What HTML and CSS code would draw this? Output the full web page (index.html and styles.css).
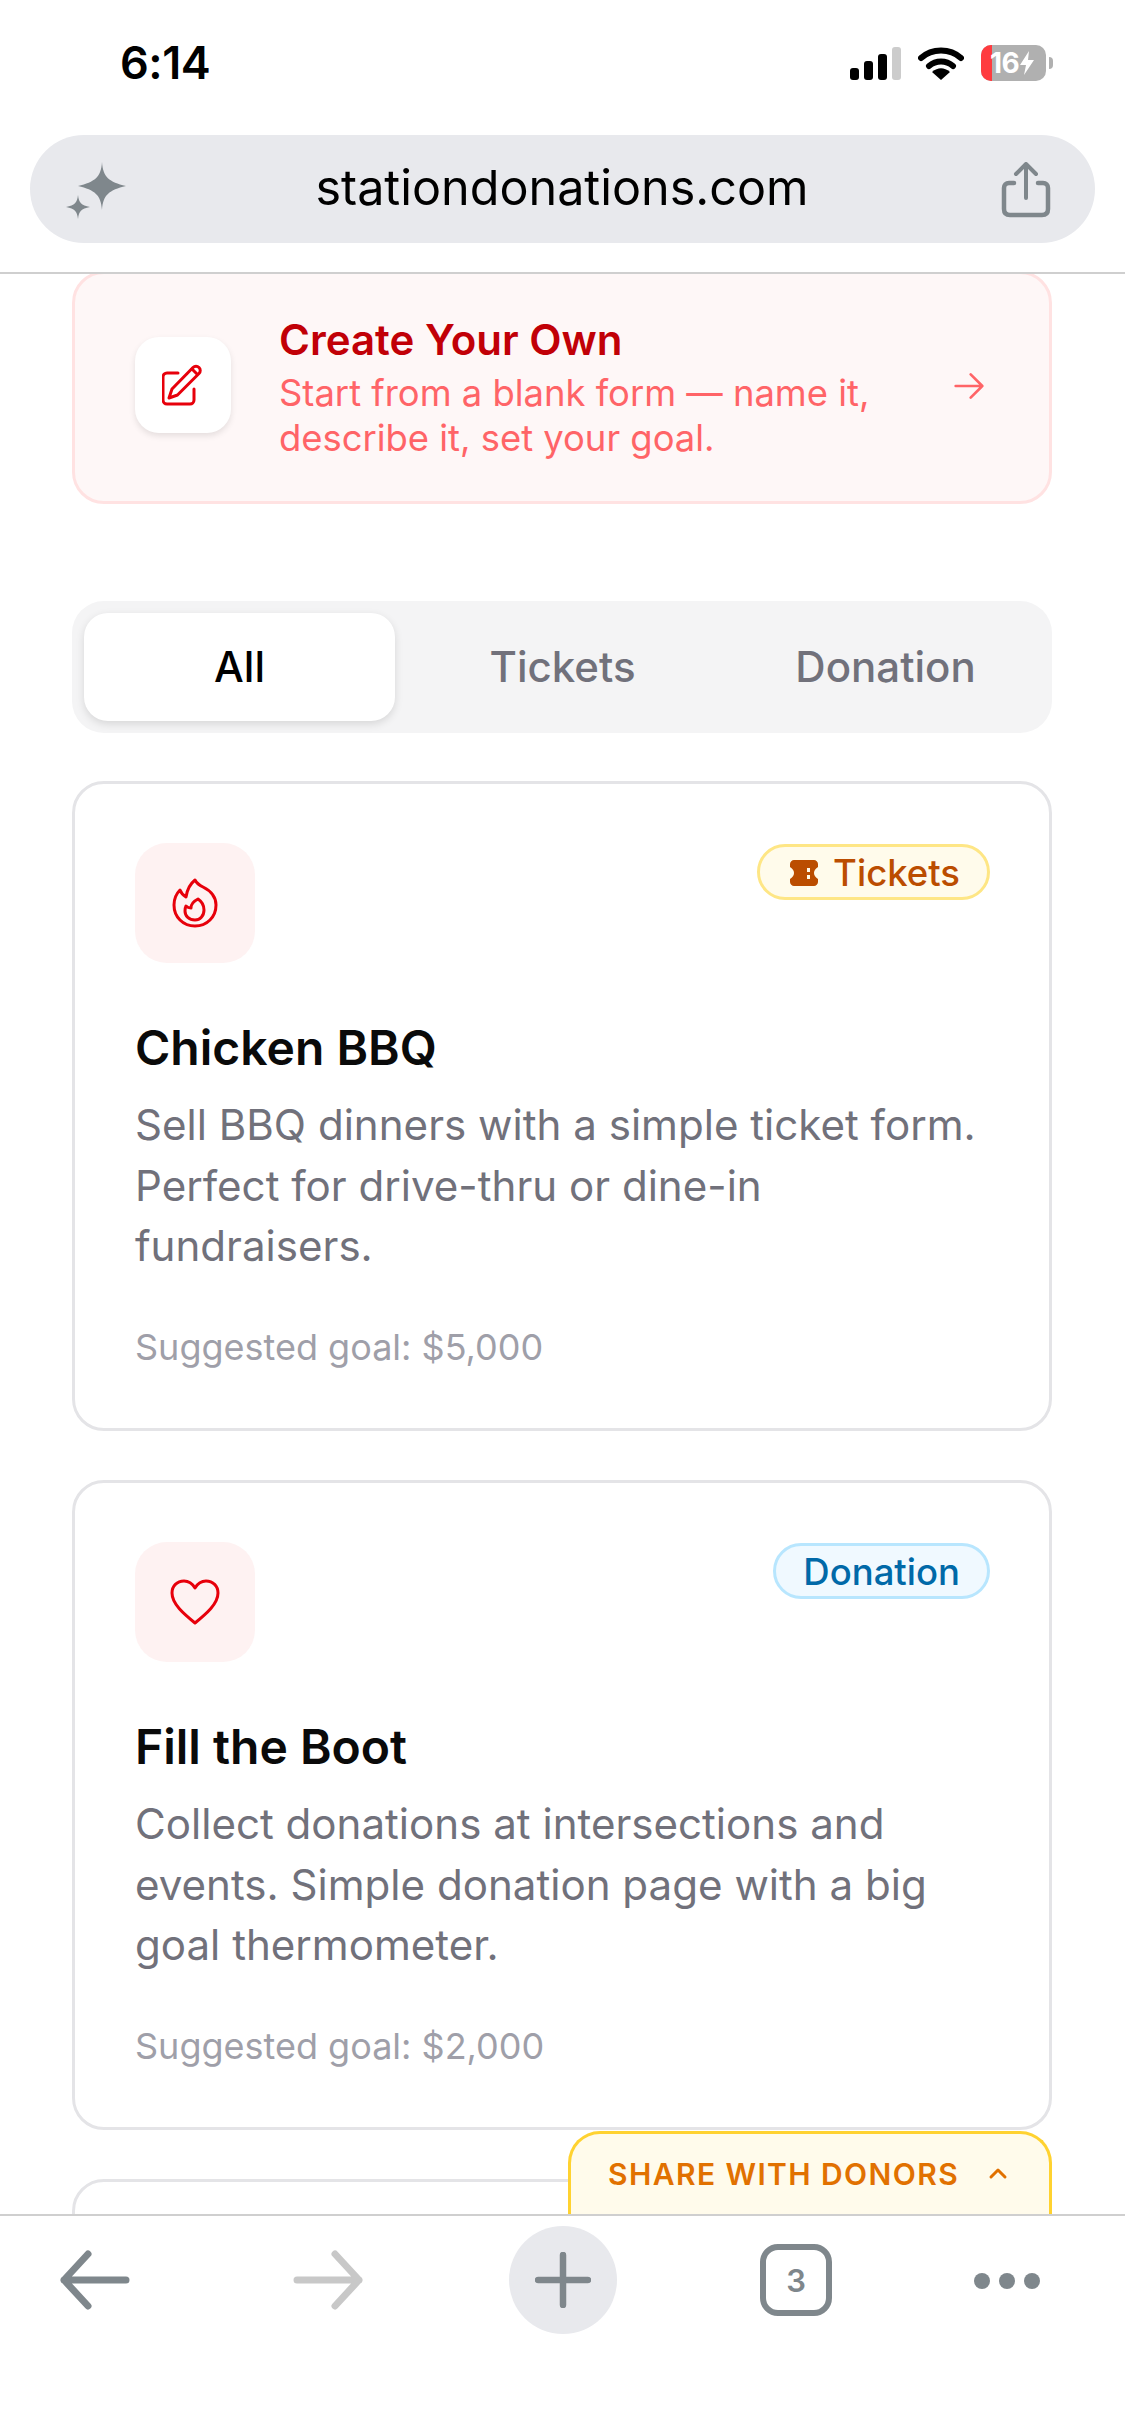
FILE: index.html
```html
<!DOCTYPE html>
<html lang="en">
<head>
<meta charset="utf-8">
<title>Station Donations</title>
<link rel="stylesheet" href="styles.css">
</head>
<body>
<div class="phone">
  <header class="chrome">
    <div class="status">
      <span class="time">6:14</span>
      <div class="status-icons">
        <svg class="signal" width="51" height="33" viewBox="0 0 51 33"><rect x="0" y="21" width="9" height="12" rx="3" fill="#000"/><rect x="14" y="14" width="9" height="19" rx="3" fill="#000"/><rect x="28" y="7" width="9" height="26" rx="3" fill="#000"/><rect x="42" y="0" width="9" height="33" rx="3" fill="#ccc"/></svg>
        <svg class="wifi" width="46" height="33" viewBox="0 0 46 33"><path d="M3 11C14 1 32 1 43 11" fill="none" stroke="#000" stroke-width="6" stroke-linecap="round"/><path d="M11 19C18 13 28 13 35 19" fill="none" stroke="#000" stroke-width="6" stroke-linecap="round"/><path d="M14 25C20 20 26 20 32 25L23 33Z" fill="#000"/></svg>
        <div class="battery"><div class="batt-body"><div class="batt-red"></div><span class="batt-num">16</span><svg class="batt-bolt" width="14" height="24" viewBox="0 0 14 24"><path d="M9 0L0 14H6L4 24L14 9H8Z" fill="#fff"/></svg></div><div class="batt-cap"></div></div>
      </div>
    </div>
    <div class="urlbar">
      <svg class="spark" width="64" height="60" viewBox="0 0 64 60"><path d="M37 1C38 16 44 21 61 25C44 29 38 34 37 49C36 34 30 29 13 25C30 21 36 16 37 1Z" fill="#7f878c"/><path d="M13 34C14 42 16 44 25 46C16 48 14 50 13 58C12 50 10 48 1 46C10 44 12 42 13 34Z" fill="#7f878c"/></svg>
      <span class="url">stationdonations.com</span>
      <svg class="share" width="50" height="56" viewBox="0 0 50 56"><path d="M13 21H8C5 21 3 23 3 26V47C3 51 5 53 9 53H41C45 53 47 51 47 47V26C47 23 45 21 42 21H37" fill="none" stroke="#7f878c" stroke-width="4.500" stroke-linecap="round"/><path d="M25 36V3M15 12L25 2L35 12" fill="none" stroke="#7f878c" stroke-width="4" stroke-linecap="round" stroke-linejoin="round"/></svg>
    </div>
  </header>

  <main class="content">
    <section class="create">
      <div class="create-icon">
        <svg width="42" height="42" viewBox="0 0 42 42" fill="none" stroke="#e7000b" stroke-width="3" stroke-linecap="round" stroke-linejoin="round"><path d="M16 9H5a4 4 0 0 0-4 4v23a4 4 0 0 0 4 4h23a4 4 0 0 0 4-4V25"/><path d="M7 34l3-9L31 3.500a4 4 0 0 1 6 6L15.500 31Z"/><path d="M30 5l5 5"/></svg>
      </div>
      <div class="create-text">
        <h2 class="create-title">Create Your Own</h2>
        <p class="create-desc">Start from a blank form — name it, describe it, set your goal.</p>
      </div>
      <svg class="create-arrow" width="40" height="40" viewBox="0 0 24 24" fill="none" stroke="#ff6467" stroke-width="1.600" stroke-linecap="round" stroke-linejoin="round"><path d="M4 12h16M13 5l7 7-7 7"/></svg>
    </section>

    <nav class="tabs">
      <div class="tab active">All</div>
      <div class="tab">Tickets</div>
      <div class="tab">Donation</div>
    </nav>

    <article class="card">
      <div class="card-top">
        <div class="card-icon">
          <svg width="46" height="50" viewBox="0 0 46 50" fill="none" stroke="#e7000b" stroke-width="3" stroke-linecap="round" stroke-linejoin="round"><path d="M23 2C25 6 27 7 31 9C39 13 44 19 44 27C44 39 35 48 23 48C11 48 2 39 2 27C2 21 4 16 8 12C9 15 11 17 14 19C15 12 18 6 23 2Z"/><path d="M14 28C15 29 17 30 19 30C19 26 22 23 26 21C29 23 32 27 32 32C32 38 28 42 23 42C17 42 13 38 13 33C13 31 13 30 14 28Z"/></svg>
        </div>
        <span class="badge badge-tickets">
          <svg width="30" height="26" viewBox="0 0 30 26"><path d="M5 0H25C27 0 29 2 29 4V7C26 9 25 11 25 13C25 15 26 17 29 19V22C29 24 27 26 25 26H5C3 26 1 24 1 22V19C4 17 5 15 5 13C5 11 4 9 1 7V4C1 2 3 0 5 0Z" fill="#bb4d00"/><rect x="18" y="8" width="3" height="4" fill="#fffbeb"/><rect x="18" y="15" width="3" height="4" fill="#fffbeb"/></svg>
          Tickets
        </span>
      </div>
      <h3 class="card-title">Chicken BBQ</h3>
      <p class="card-desc">Sell BBQ dinners with a simple ticket form. Perfect for drive-thru or dine-in fundraisers.</p>
      <p class="card-goal">Suggested goal: $5,000</p>
    </article>

    <article class="card">
      <div class="card-top">
        <div class="card-icon">
          <svg width="50" height="46" viewBox="0 0 50 46" fill="none" stroke="#e7000b" stroke-width="3" stroke-linecap="round" stroke-linejoin="round"><path d="M25 9C22 4 18 2 14 2C7 2 2 7 2 14C2 25 14 35 25 44C36 35 48 25 48 14C48 7 43 2 36 2C32 2 28 4 25 9Z"/></svg>
        </div>
        <span class="badge badge-donation">Donation</span>
      </div>
      <h3 class="card-title">Fill the Boot</h3>
      <p class="card-desc">Collect donations at intersections and events. Simple donation page with a big goal thermometer.</p>
      <p class="card-goal">Suggested goal: $2,000</p>
    </article>

    <article class="card"></article>

    <div class="share-tab">
      <span>SHARE WITH DONORS</span>
      <svg width="22" height="14" viewBox="0 0 22 14" fill="none" stroke="#e17100" stroke-width="3" stroke-linecap="round" stroke-linejoin="round"><path d="M4 11l7-7 7 7"/></svg>
    </div>
  </main>

  <footer class="toolbar">
    <button class="tool">
      <svg width="72" height="60" viewBox="0 0 72 60" fill="none" stroke="#7f878c" stroke-width="7" stroke-linecap="round" stroke-linejoin="round"><path d="M67 30H5M29 4L5 30L29 56"/></svg>
    </button>
    <button class="tool tool-forward">
      <svg width="72" height="60" viewBox="0 0 72 60" fill="none" stroke="#c8c8c8" stroke-width="7" stroke-linecap="round" stroke-linejoin="round"><path d="M5 30H67M43 4L67 30L43 56"/></svg>
    </button>
    <div class="plus">
      <svg width="56" height="56" viewBox="0 0 56 56" fill="none" stroke="#7f878c" stroke-width="6.500" stroke-linecap="round"><path d="M3 28H53M28 3V53"/></svg>
    </div>
    <div class="tabcount">3</div>
    <div class="more"><i></i><i></i><i></i></div>
  </footer>
</div>
</body>
</html>
```

FILE: styles.css
```css
* { box-sizing: border-box; margin: 0; padding: 0; }
html, body { background: #fff; }
body { width: 1125px; height: 2436px; overflow: hidden; font-family: Inter, "Liberation Sans", sans-serif; }
.phone { width: 1125px; height: 2436px; display: flex; flex-direction: column; background: #fff; }

.chrome { height: 274px; flex: none; border-bottom: 2px solid #cfcfcf; background: #fff; padding: 0 30px; position: relative; z-index: 3; }
.status { height: 135px; display: flex; justify-content: space-between; padding: 39px 42px 0 90px; }
.time { font-weight: 600; font-size: 45px; line-height: 48px; color: #000; letter-spacing: -0.5px; }
.status-icons { display: flex; align-items: flex-start; gap: 17px; padding-top: 8px; }
.battery { display: flex; align-items: center; gap: 3px; margin-top: -2px; }
.batt-body { width: 65px; height: 36px; border-radius: 10px; background: #b0b0b0; display: flex; align-items: center; position: relative; overflow: hidden; padding-left: 9px; }
.batt-red { position: absolute; left: 0; top: 0; bottom: 0; width: 11px; background: #ff3b3f; }
.batt-num { position: relative; font-weight: 700; font-size: 28px; color: #fff; line-height: 36px; letter-spacing: -0.5px; }
.batt-bolt { position: relative; margin-left: 1px; }
.batt-cap { width: 4px; height: 12px; background: #b0b0b0; border-radius: 0 4px 4px 0; }

.urlbar { height: 108px; border-radius: 54px; background: #e8e9ed; display: flex; align-items: center; justify-content: space-between; padding: 0 44px 0 35px; }
.url { font-size: 48.5px; color: #000; font-weight: 400; margin: -3px 6px 0 0; }
.spark { margin-top: 4px; }
.share { margin-top: 2px; }

.content { flex: 1; overflow: hidden; position: relative; padding: 0 73px 0 72px; min-height: 0; }
.create { height: 233px; margin-top: -3px; border: 3px solid #ffe2e2; border-radius: 32px; background: #fef7f7; display: flex; align-items: center; padding: 0 60px; }
.create-icon { width: 96px; height: 96px; flex: none; border-radius: 24px; background: #fff; box-shadow: 0 3px 6px rgba(0,0,0,.1); display: flex; align-items: center; justify-content: center; margin-top: -5px; }
.create-text { flex: 1; padding-left: 48px; }
.create-title { font-size: 42px; line-height: 48px; font-weight: 600; color: #c10007; margin-top: 1.5px; }
.create-desc { font-size: 36.4px; line-height: 45px; color: #ff6467; width: 640px; margin-top: 6.5px; }
.create-arrow { flex: none; margin-top: -4px; }

.tabs { margin-top: 97px; height: 132px; background: #f4f4f5; border-radius: 32px; padding: 12px 11px 12px 12px; display: grid; grid-template-columns: repeat(3, 1fr); gap: 12px; align-items: stretch; }
.tab { display: flex; align-items: center; justify-content: center; font-size: 42px; font-weight: 500; color: #71717b; border-radius: 24px; padding-bottom: 2px; }
.tab.active { color: #000; background: #fff; box-shadow: 0 3px 8px rgba(0,0,0,.12); }

.card { height: 650px; margin-top: 49px; border: 3px solid #e4e4e7; border-radius: 32px; padding: 59px 60px 0 60px; background: #fff; }
.tabs + .card { margin-top: 48px; }
.card-top { display: flex; justify-content: space-between; align-items: flex-start; height: 120px; }
.card-icon { width: 120px; height: 120px; border-radius: 32px; background: #fef2f2; display: flex; align-items: center; justify-content: center; }
.badge { height: 56px; border-radius: 28px; display: inline-flex; align-items: center; font-size: 36.5px; font-weight: 500; border: 3px solid; padding: 2px 27px 0; margin-top: 1px; position: relative; left: 1px; }
.badge-tickets { color: #bb4d00; background: #fffbeb; border-color: #fee685; padding-left: 29px; gap: 14px; }
.badge-donation { color: #0069a8; background: #f0f9ff; border-color: #b8e6fe; }
.card-title { font-size: 48px; line-height: 60px; font-weight: 600; color: #0a0a0a; margin-top: 55px; }
.card-desc { font-size: 42.1px; line-height: 60.5px; color: #71717b; margin-top: 17px; }
.card-goal { font-size: 36px; line-height: 44px; color: #9f9fa9; margin-top: 48px; }

.share-tab { position: absolute; left: 568px; right: 73px; top: 1857px; height: 90px; background: #fffbeb; border: 3px solid #ffd230; border-bottom: 0; border-radius: 32px 32px 0 0; display: flex; align-items: flex-start; justify-content: space-between; padding: 21px 40px 0 37px; color: #e17100; font-size: 30px; font-weight: 600; letter-spacing: 1.4px; line-height: 38px; }
.share-tab svg { margin-top: 11px; }

.toolbar { height: 222px; flex: none; background: #fff; border-top: 2px solid #cfcfcf; display: flex; align-items: flex-start; gap: 144px; padding: 10px 0 0 59px; position: relative; z-index: 3; }
.tool { width: 72px; height: 108px; border: 0; background: none; display: flex; align-items: center; justify-content: center; }
.tool-forward { margin-left: 17px; }
.plus { width: 108px; height: 108px; border-radius: 50%; background: #e8e9ed; display: flex; align-items: center; justify-content: center; margin-left: 1px; }
.tabcount { width: 72px; height: 72px; margin-top: 18px; margin-left: -1px; border: 6px solid #7f878c; border-radius: 18px; color: #7f878c; font-size: 31px; font-weight: 600; display: flex; align-items: center; justify-content: center; }
.more { display: flex; gap: 9px; margin-top: 47px; margin-left: -2px; width: 68px; }
.more i { display: block; width: 16px; height: 16px; border-radius: 50%; background: #7f878c; }
```
